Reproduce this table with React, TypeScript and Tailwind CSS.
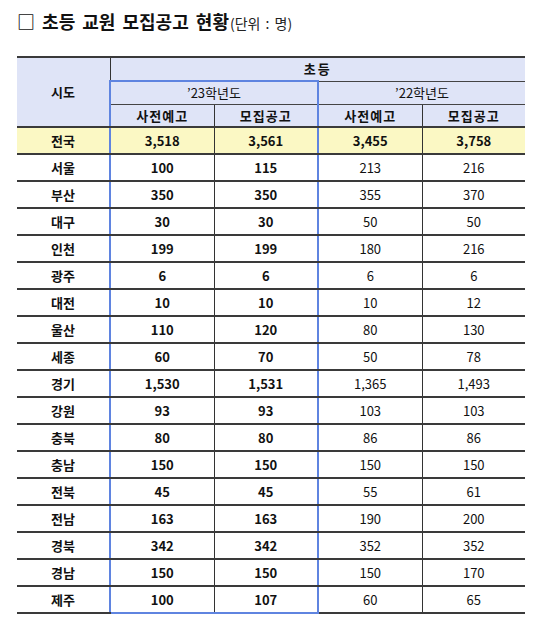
import React from "react";

const rows: [string, string, string, string, string][] = [
  ["전국", "3,518", "3,561", "3,455", "3,758"],
  ["서울", "100", "115", "213", "216"],
  ["부산", "350", "350", "355", "370"],
  ["대구", "30", "30", "50", "50"],
  ["인천", "199", "199", "180", "216"],
  ["광주", "6", "6", "6", "6"],
  ["대전", "10", "10", "10", "12"],
  ["울산", "110", "120", "80", "130"],
  ["세종", "60", "70", "50", "78"],
  ["경기", "1,530", "1,531", "1,365", "1,493"],
  ["강원", "93", "93", "103", "103"],
  ["충북", "80", "80", "86", "86"],
  ["충남", "150", "150", "150", "150"],
  ["전북", "45", "45", "55", "61"],
  ["전남", "163", "163", "190", "200"],
  ["경북", "342", "342", "352", "352"],
  ["경남", "150", "150", "150", "170"],
  ["제주", "100", "107", "60", "65"],
];

export default function App() {
  const font = { fontFamily: '"Noto Sans CJK KR", "Noto Sans", sans-serif' };
  return (
    <div className="w-[534px] h-[626px] bg-white text-[#111] pt-[8px] pl-[17px]" style={font}>
      <div className="flex items-baseline h-[24px]">
        <span className="text-[18px] font-bold [word-spacing:3px]">□ 초등 교원 모집공고 현황</span>
        <span className="text-[14px] ml-[1px] text-[#222] [word-spacing:2px]">(단위 : 명)</span>
      </div>
      <table className="mt-[24px] border-collapse table-fixed w-[508px] text-[13px] text-center">
        <colgroup>
          <col className="w-[93px]" />
          <col className="w-[104px]" />
          <col className="w-[104px]" />
          <col className="w-[104px]" />
          <col className="w-[103px]" />
        </colgroup>
        <thead className="bg-[#dfe4f7] font-bold">
          <tr className="h-[24px]">
            <td rowSpan={3} className="border-t-2 border-t-[#3a3a3a] border-r border-r-[#333] border-b-2 border-b-[#3a3a3a] p-0">
              시도
            </td>
            <td colSpan={4} className="border-t-2 border-t-[#3a3a3a] border-b border-b-[#444] p-0 tracking-[2px]">
              초등
            </td>
          </tr>
          <tr className="h-[23px]">
            <td colSpan={2} className="border-2 border-[#5f84e0] border-b border-b-[#444] p-0 font-normal">
              ’23학년도
            </td>
            <td colSpan={2} className="border-b border-b-[#444] p-0 font-normal">
              ’22학년도
            </td>
          </tr>
          <tr className="h-[23px]">
            <td className="border-l-2 border-l-[#5f84e0] border-r border-r-[#333] border-b-2 border-b-[#3a3a3a] p-0 tracking-[1px]">사전예고</td>
            <td className="border-r-2 border-r-[#5f84e0] border-b-2 border-b-[#3a3a3a] p-0 tracking-[1px]">모집공고</td>
            <td className="border-r border-r-[#333] border-b-2 border-b-[#3a3a3a] p-0 tracking-[1px]">사전예고</td>
            <td className="border-b-2 border-b-[#3a3a3a] p-0 tracking-[1px]">모집공고</td>
          </tr>
        </thead>
        <tbody>
          {rows.map((r, i) => {
            const last = i === rows.length - 1;
            const bg = i === 0 ? "bg-[#fbf8c4]" : "bg-white";
            return (
              <tr key={r[0]} className={`h-[27px] ${bg}`}>
                <td className="border-b-2 border-b-[#3a3a3a] border-r border-r-[#333] p-0 font-bold">{r[0]}</td>
                <td
                  className={
                    last
                      ? "border-b-2 border-b-[#5f84e0] border-l-2 border-l-[#5f84e0] border-r border-r-[#333] p-0 font-bold"
                      : "border-b-2 border-b-[#3a3a3a] border-l-2 border-l-[#5f84e0] border-r border-r-[#333] p-0 font-bold"
                  }
                >
                  {r[1]}
                </td>
                <td
                  className={
                    last
                      ? "border-b-2 border-b-[#5f84e0] border-r-2 border-r-[#5f84e0] p-0 font-bold"
                      : "border-b-2 border-b-[#3a3a3a] border-r-2 border-r-[#5f84e0] p-0 font-bold"
                  }
                >
                  {r[2]}
                </td>
                <td className={`border-b-2 border-b-[#3a3a3a] border-r border-r-[#333] p-0 ${i === 0 ? "font-bold" : ""}`}>{r[3]}</td>
                <td className={`border-b-2 border-b-[#3a3a3a] p-0 ${i === 0 ? "font-bold" : ""}`}>{r[4]}</td>
              </tr>
            );
          })}
        </tbody>
      </table>
    </div>
  );
}
